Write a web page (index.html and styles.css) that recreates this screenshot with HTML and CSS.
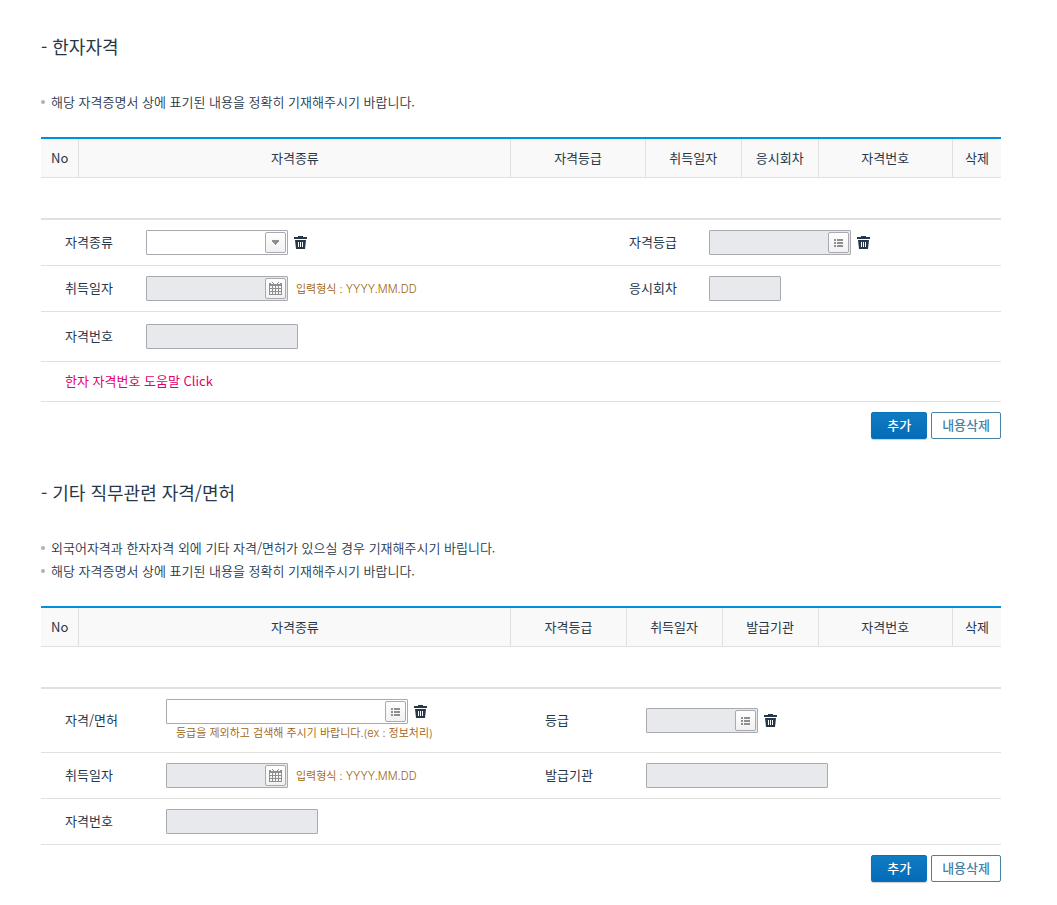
FILE: index.html
```html
<!DOCTYPE html>
<html lang="ko">
<head>
<meta charset="utf-8">
<title>자격/면허</title>
<meta name="viewport" content="width=device-width, initial-scale=1">
<link rel="stylesheet" href="styles.css">
</head>
<body>
<svg class="sprite" aria-hidden="true">
  <symbol id="trash" viewBox="0 0 13 13">
    <path fill-rule="evenodd" d="M4 0h5v1h4v2H0V1h4zM1 4h11l-1 9H2zM4 6v5h1V6zM6 6v5h1V6zM8 6v5h1V6z"/>
  </symbol>
  <symbol id="list" viewBox="0 0 9 8">
    <path d="M0 0h2v2H0zM3 0h6v2H3zM0 3h2v2H0zM3 3h6v2H3zM0 6h2v2H0zM3 6h6v2H3z"/>
  </symbol>
  <symbol id="caret" viewBox="0 0 7 5">
    <path d="M0 0h7v2H6v1H5v1H4v1H3V4H2V3H1V2H0z"/>
  </symbol>
  <symbol id="calendar" viewBox="0 0 13 13">
    <path fill-rule="evenodd" d="M0 1h2v1h2V1h1v1h3V1h1v1h2V1h2v12H0zM1 4v2h2V4zM4 4v2h2V4zM7 4v2h2V4zM10 4v2h2V4zM1 7v2h2V7zM4 7v2h2V7zM7 7v2h2V7zM10 7v2h2V7zM1 10v2h2v-2zM4 10v2h2v-2zM7 10v2h2v-2zM10 10v2h2v-2z"/>
    <path d="M3 0h1v1H3zM9 0h1v1H9z"/>
  </symbol>
</svg>
<main class="page">
  <section class="section">
    <h2 class="title">- 한자자격</h2>
    <ul class="notes">
      <li>해당 자격증명서 상에 표기된 내용을 정확히 기재해주시기 바랍니다.</li>
    </ul>
    <table class="list">
      <colgroup><col class="w4"><col class="w45"><col class="w14"><col class="w10"><col class="w8"><col class="w14"><col class="w5"></colgroup>
      <thead>
        <tr><th>No</th><th>자격종류</th><th>자격등급</th><th>취득일자</th><th>응시회차</th><th>자격번호</th><th>삭제</th></tr>
      </thead>
      <tbody><tr><td colspan="7"></td></tr></tbody>
    </table>
    <form class="form">
      <div class="row row-hanja">
        <label class="label" for="h-kind">자격종류</label>
        <div class="field">
          <div class="box box-m">
            <select id="h-kind" class="control"><option></option></select>
            <span class="pick pick-over"><svg width="7" height="5"><use href="#caret"/></svg></span>
          </div>
          <button type="button" class="clear" aria-label="자격종류 지우기"><svg width="13" height="13"><use href="#trash"/></svg></button>
        </div>
        <label class="label" for="h-grade">자격등급</label>
        <div class="field">
          <div class="box box-m off">
            <input id="h-grade" class="control" type="text" readonly>
            <button type="button" class="pick" aria-label="자격등급 찾기"><svg width="9" height="8"><use href="#list"/></svg></button>
          </div>
          <button type="button" class="clear" aria-label="자격등급 지우기"><svg width="13" height="13"><use href="#trash"/></svg></button>
        </div>
      </div>
      <div class="row row-hanja">
        <label class="label" for="h-date">취득일자</label>
        <div class="field">
          <div class="box box-m off">
            <input id="h-date" class="control" type="text" readonly>
            <button type="button" class="pick" aria-label="달력"><svg width="13" height="13"><use href="#calendar"/></svg></button>
          </div>
          <span class="hint">입력형식 : YYYY.MM.DD</span>
        </div>
        <label class="label" for="h-round">응시회차</label>
        <div class="field">
          <div class="box box-xs off"><input id="h-round" class="control" type="text" readonly></div>
        </div>
      </div>
      <div class="row row-hanja row-tall">
        <label class="label" for="h-no">자격번호</label>
        <div class="field">
          <div class="box box-l off"><input id="h-no" class="control" type="text" readonly></div>
        </div>
      </div>
      <div class="row row-help"><a class="help" href="#">한자 자격번호 도움말 Click</a></div>
    </form>
    <div class="actions">
      <button type="button" class="btn btn-primary">추가</button>
      <button type="button" class="btn btn-line">내용삭제</button>
    </div>
  </section>

  <section class="section">
    <h2 class="title">- 기타 직무관련 자격/면허</h2>
    <ul class="notes">
      <li>외국어자격과 한자자격 외에 기타 자격/면허가 있으실 경우 기재해주시기 바립니다.</li>
      <li>해당 자격증명서 상에 표기된 내용을 정확히 기재해주시기 바랍니다.</li>
    </ul>
    <table class="list">
      <colgroup><col class="w4"><col class="w45"><col class="w12"><col class="w10"><col class="w10"><col class="w14"><col class="w5"></colgroup>
      <thead>
        <tr><th>No</th><th>자격종류</th><th>자격등급</th><th>취득일자</th><th>발급기관</th><th>자격번호</th><th>삭제</th></tr>
      </thead>
      <tbody><tr><td colspan="7"></td></tr></tbody>
    </table>
    <form class="form">
      <div class="row row-etc">
        <label class="label" for="e-kind">자격/면허</label>
        <div class="stack">
          <div class="field">
            <div class="box box-xl">
              <input id="e-kind" class="control" type="text">
              <button type="button" class="pick" aria-label="자격/면허 찾기"><svg width="9" height="8"><use href="#list"/></svg></button>
            </div>
            <button type="button" class="clear" aria-label="자격/면허 지우기"><svg width="13" height="13"><use href="#trash"/></svg></button>
          </div>
          <p class="hint hint-below">등급을 제외하고 검색해 주시기 바랍니다.(ex : 정보처리)</p>
        </div>
        <label class="label" for="e-grade">등급</label>
        <div class="field">
          <div class="box box-s off">
            <input id="e-grade" class="control" type="text" readonly>
            <button type="button" class="pick" aria-label="등급 찾기"><svg width="9" height="8"><use href="#list"/></svg></button>
          </div>
          <button type="button" class="clear" aria-label="등급 지우기"><svg width="13" height="13"><use href="#trash"/></svg></button>
        </div>
      </div>
      <div class="row row-etc">
        <label class="label" for="e-date">취득일자</label>
        <div class="field">
          <div class="box box-date off">
            <input id="e-date" class="control" type="text" readonly>
            <button type="button" class="pick" aria-label="달력"><svg width="13" height="13"><use href="#calendar"/></svg></button>
          </div>
          <span class="hint">입력형식 : YYYY.MM.DD</span>
        </div>
        <label class="label" for="e-org">발급기관</label>
        <div class="field">
          <div class="box box-org off"><input id="e-org" class="control" type="text" readonly></div>
        </div>
      </div>
      <div class="row row-etc">
        <label class="label" for="e-no">자격번호</label>
        <div class="field">
          <div class="box box-l off"><input id="e-no" class="control" type="text" readonly></div>
        </div>
      </div>
    </form>
    <div class="actions">
      <button type="button" class="btn btn-primary">추가</button>
      <button type="button" class="btn btn-line">내용삭제</button>
    </div>
  </section>
</main>
</body>
</html>
```
FILE: styles.css
```css
* { box-sizing: border-box; }

body {
  margin: 0;
  background: #fff;
  color: #26374a;
  font: 13px/21px "Noto Sans CJK KR", sans-serif;
}

button, input, select { font: inherit; color: inherit; }
button { cursor: pointer; }
svg { display: block; fill: currentColor; }
.sprite { display: none; }

.page { padding: 34px 56px 23px 41px; }
.section + .section { margin-top: 41px; }

.title {
  margin: 0 0 31px;
  padding-bottom: 2px;
  font-size: 18px;
  line-height: 24px;
  font-weight: 400;
}

.notes { margin: 0 0 23px; padding: 0; list-style: none; font-weight: 350; }
.notes li { display: flex; align-items: center; gap: 6px; padding-bottom: 2px; }
.notes li::before {
  content: "";
  flex: none;
  width: 4px;
  height: 4px;
  border-radius: 50%;
  background: #b2b2b2;
}

/* Registered items */
.list {
  width: 100%;
  table-layout: fixed;
  border-collapse: separate;
  border-spacing: 0;
  border-top: 2px solid #0091da;
}
.list th {
  height: 39px;
  padding: 0 0 2px;
  border-right: 1px solid #e0e0e0;
  border-bottom: 1px solid #e0e0e0;
  background: #f9f9f9;
  font-weight: 400;
}
.list th:last-child { border-right: 0; }
.list td { height: 40px; padding: 0; }
.w4 { width: 4%; }
.w5 { width: 5%; }
.w8 { width: 8%; }
.w10 { width: 10%; }
.w12 { width: 12%; }
.w14 { width: 14%; }
.w45 { width: 45%; }

/* Entry form */
.form { border-top: 2px solid #e0e0e0; }
.row {
  display: grid;
  align-items: center;
  padding: 10px 0;
  border-bottom: 1px solid #e0e0e0;
}
.row-hanja { grid-template-columns: 105px 459fr 104px 292fr; }
.row-etc { grid-template-columns: 125px 1fr 125px 1fr; }
.row-tall { padding: 12px 0; }
.row-help { padding: 8px 24px 10px; }
.label { padding: 0 0 2px 24px; }
.field { display: flex; align-items: center; }

.box {
  position: relative;
  display: flex;
  height: 25px;
  padding: 1px;
  border: 1px solid #a9a9b0;
  border-radius: 1px;
  background: #fff;
}
.box.off { background: #e8e9ed; }
.box-xs { width: 72px; }
.box-s { width: 112px; }
.box-date { width: 122px; }
.box-m { width: 142px; }
.box-l { width: 152px; }
.box-org { width: 182px; }
.box-xl { width: 242px; }

.control {
  flex: 1;
  min-width: 0;
  padding: 0 4px;
  border: 0;
  outline: 0;
  background: transparent;
  appearance: none;
}

.pick {
  flex: none;
  display: grid;
  place-items: center;
  width: 21px;
  height: 21px;
  padding: 0;
  border: 1px solid #a9a9b0;
  border-radius: 2px;
  background: linear-gradient(#fff, #f1f1f1);
  color: #8f8f8f;
}
.pick-over { position: absolute; top: 1px; right: 1px; pointer-events: none; }

.clear {
  margin-left: 6px;
  padding: 0;
  border: 0;
  background: none;
  color: #26374a;
}

.hint {
  margin-left: 8px;
  color: #a0620c;
  font-family: Inter, "Noto Sans CJK KR", sans-serif;
  font-size: 11px;
  line-height: 18px;
  font-weight: 350;
}
.hint-below { margin: 0; padding-left: 10px; }

.help { color: #e4006d; text-decoration: none; }

.actions {
  display: flex;
  justify-content: flex-end;
  gap: 4px;
  margin-top: 10px;
}
.btn {
  height: 27px;
  padding: 0 10px 2px;
  border: 1px solid #4682a5;
  border-radius: 2px;
  font-weight: 500;
  line-height: 23px;
}
.btn-primary {
  padding: 0 15px 2px;
  border-color: #0a70b8;
  background: linear-gradient(#0f7cc2, #056bb9);
  box-shadow: 0 1px 1px #ccc;
  color: #fff;
}
.btn-line { background: #fff; color: #4682a5; }
```
